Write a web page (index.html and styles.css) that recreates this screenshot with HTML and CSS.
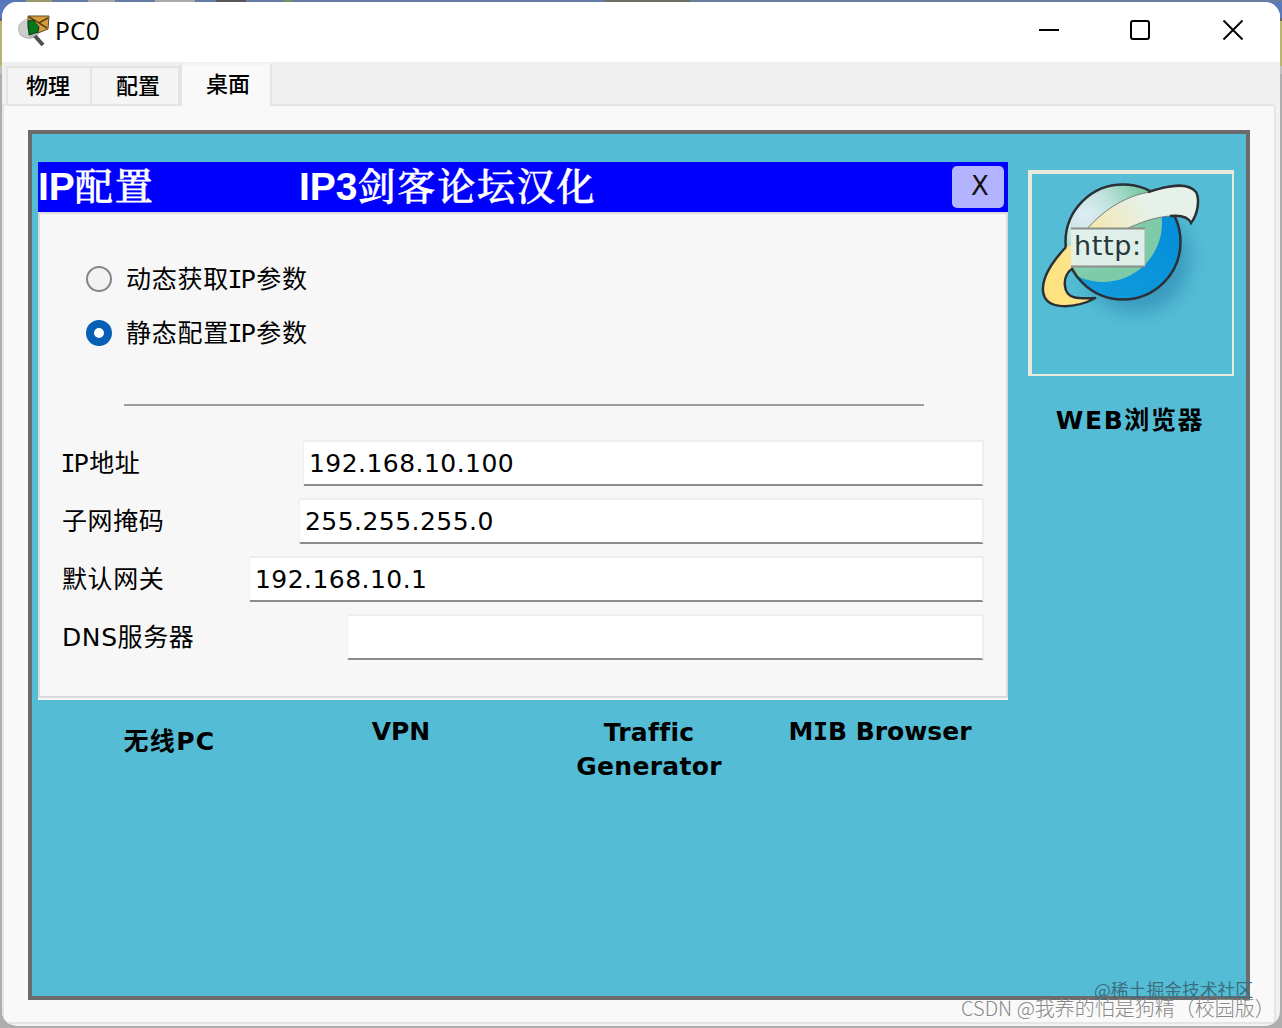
FILE: index.html
```html
<!DOCTYPE html>
<html lang="zh-CN">
<head>
<meta charset="utf-8">
<title>PC0</title>
<link rel="stylesheet" href="styles.css">
</head>
<body>
<div class="window">
  <header class="titlebar">
    <svg class="app-icon" width="32" height="32" viewBox="0 0 32 32">
      <ellipse cx="11" cy="14" rx="11" ry="10" fill="#b3b5b4"/>
      <path d="M3 8Q8 2 14 4L11 23Q1 21 0 14Z" fill="#cdcecc"/>
      <path d="M17 21L25 30" stroke="#4d504d" stroke-width="4"/>
      <path d="M10 1L31 1L30 14L20 18L10 14Z" fill="#d89c3b" stroke="#5b4a2c"/>
      <path d="M11 2L21 8L30 3M21 8L29 13" fill="none" stroke="#5a4015" stroke-width="1.5"/>
      <path d="M10 6L15 5L21 12L20 17L11 20Z" fill="#08761c" stroke="#064511"/>
    </svg>
    <h1 class="title">PC0</h1>
    <svg class="controls" width="206" height="24" viewBox="0 0 206 24">
      <g fill="none" stroke="#000" stroke-width="2">
        <path d="M0 12H20"/>
        <rect x="92" y="3" width="18" height="18" rx="2"/>
        <path d="M184.500 2.500L203.500 21.500M203.500 2.500L184.500 21.500" stroke-width="1.900"/>
      </g>
    </svg>
  </header>
  <nav class="tabs">
    <span class="tab tab-physical">物理</span>
    <span class="tab tab-config">配置</span>
    <span class="tab tab-desktop">桌面</span>
  </nav>
  <main class="pane">
    <div class="desktop">
      <div class="left">
        <section class="dialog">
          <div class="dialog-head">
            <span class="head-name">IP<b>配置</b></span>
            <span class="head-credit">IP3<b>剑客论坛汉化</b></span>
            <span class="close">X</span>
          </div>
          <div class="dialog-body">
            <div class="radio"><i class="dot"></i><span>动态获取<span class="cap-i">I</span>P参数</span></div>
            <div class="radio"><i class="dot checked"></i><span>静态配置<span class="cap-i">I</span>P参数</span></div>
            <div class="rule"></div>
            <div class="field"><label><span class="cap-i">I</span>P地址</label><div class="input w-ip">192.168.10.100</div></div>
            <div class="field"><label>子网掩码</label><div class="input w-mask">255.255.255.0</div></div>
            <div class="field"><label>默认网关</label><div class="input w-gate">192.168.10.1</div></div>
            <div class="field"><label>DNS服务器</label><div class="input w-dns"></div></div>
          </div>
        </section>
        <div class="apps">
          <span class="app wireless">无线PC</span>
          <span class="app">VPN</span>
          <span class="app traffic">Traffic<br>Generator</span>
          <span class="app mib">M<span class="cap-i">I</span>B Browser</span>
        </div>
      </div>
      <div class="right">
        <div class="web-icon">
          <svg width="200" height="200" viewBox="1032 174 200 200">
            <defs>
              <linearGradient id="ring" gradientUnits="userSpaceOnUse" x1="1045" y1="300" x2="1185" y2="195"><stop offset="0" stop-color="#ffe27c"/><stop offset=".3" stop-color="#fbe48e"/><stop offset=".55" stop-color="#f0eac0"/><stop offset=".8" stop-color="#e6f1ea"/></linearGradient>
              <radialGradient id="land" gradientUnits="userSpaceOnUse" cx="1085" cy="215" r="78"><stop offset="0" stop-color="#e0edf5"/><stop offset=".35" stop-color="#bfe2dd"/><stop offset=".75" stop-color="#7dcba8"/></radialGradient>
              <linearGradient id="sea" x1="0" y1="1" x2="1" y2="0"><stop offset="0" stop-color="#149ddd"/><stop offset="1" stop-color="#008bd8"/></linearGradient>
              <filter id="soft" x="-30%" y="-30%" width="160%" height="160%"><feGaussianBlur stdDeviation="9"/></filter>
              <clipPath id="globe"><circle cx="1123" cy="242" r="57"/></clipPath>
            </defs>
            <circle cx="1136" cy="259" r="54" fill="#287eab" opacity=".55" filter="url(#soft)"/>
            <circle cx="1123" cy="242" r="58" fill="url(#sea)"/>
            <circle cx="1103" cy="223" r="59" fill="url(#land)" clip-path="url(#globe)"/>
            <circle cx="1123" cy="242" r="57.500" fill="none" stroke="#2c3035" stroke-width="2.500"/>
            <path d="M1066 247C1051 263 1042 279 1043 291C1045 311 1074 309 1096 298C1078 299 1066 299 1065 286C1064 279 1067 272 1073 268L1084 241Z" fill="url(#ring)"/>
            <path d="M1066 247C1051 263 1042 279 1043 291C1045 311 1074 309 1096 298C1078 299 1066 299 1065 286C1064 279 1067 272 1073 268" fill="none" stroke="#2c3035" stroke-width="2.500"/>
            <path d="M1087 229C1105 208 1129 195 1150 192C1166 186 1187 181 1196 192C1200 199 1198 214 1191 223C1188 216 1180 215 1170 216C1154 217 1137 224 1126 229Z" fill="url(#ring)" stroke="#777c7a"/>
            <path d="M1148 192C1166 186 1187 181 1196 192C1200 199 1198 214 1191 223C1188 216 1180 215 1170 216" fill="none" stroke="#2c3035" stroke-width="2.500"/>
            <rect x="1071" y="229" width="74" height="37" fill="#e3f0eb" fill-opacity=".94"/>
            <path d="M1071 228.500H1145M1071 266.500H1145" stroke="#8b8e89" stroke-width="2"/>
            <path d="M1145 229V266" stroke="#a9b5ae"/>
            <text class="http" x="1074" y="255" textLength="67">http:</text>
          </svg>
        </div>
        <span class="app web-label">WEB浏览器</span>
      </div>
    </div>
  </main>
</div>
<div class="mark mark-juejin">@稀土掘金技术社区</div>
<div class="mark mark-csdn">CSDN @我养的怕是狗精（校园版）</div>
</body>
</html>
```
FILE: styles.css
```css
* { box-sizing: border-box; }
body {
  margin: 0;
  height: 1028px;
  padding: 2px;
  overflow: hidden;
  position: relative;
  color: #000;
  font-family: "DejaVu Sans", "Noto Sans CJK SC", sans-serif;
  background:
    linear-gradient(90deg, #5877b8 0 26px, #99986a 26px 52px, #637ba4 52px 88px, #a6a6a6 88px 115px, #637ba4 115px 155px, #aaa 155px 195px, #637ba4 195px 216px, #575555 216px 246px, #637ba4 246px 284px, #6d9654 284px 292px, #637ba4 292px 605px, #706b65 605px 690px, #667f9f 690px) 0 0 / 100% 2px no-repeat,
    linear-gradient(#5b7abb 0 18px, #65656a 18px 21px, #b8b56e 21px 66px, #c1c1c1 66px 74px, #aeaeae 74px);
}
.window {
  height: 1024px;
  display: flex;
  flex-direction: column;
  border-radius: 15px;
  overflow: hidden;
  background: #f1f1f1;
}
.titlebar {
  height: 60px;
  flex: none;
  display: flex;
  align-items: center;
  padding: 0 35px 4px 16px;
  background: #fff;
}
.app-icon { margin-top: 2px; }
.title {
  margin: 2px auto 0 5px;
  font: 400 24.5px/32px "Noto Sans", sans-serif;
  letter-spacing: .2px;
}
.tabs {
  height: 42px;
  flex: none;
  display: flex;
  align-items: flex-end;
  padding-left: 4px;
  background: #efefef;
}
.tab {
  height: 38px;
  border: 2px solid #e4e4e4;
  border-bottom: 0;
  background: #f4f4f4;
  font: 500 22px/32px "Noto Sans CJK SC", sans-serif;
}
.tab-physical { width: 86px; padding-left: 18px; }
.tab-config { width: 88px; padding-left: 24px; border-left: 0; }
.tab-desktop {
  width: 92px;
  height: 43px;
  margin-bottom: -2px;
  padding-left: 24px;
  border-top-color: #f4f4f4;
  line-height: 35px;
  background: #f9f9f9;
  z-index: 1;
}
.pane {
  flex: 1;
  margin: 0 4px 4px 0;
  padding: 24px 24px 22px 24px;
  border: 2px solid #e5e5e5;
  border-radius: 0 4px 4px 0;
  background: #f9f9f9;
}
.desktop {
  width: 1222px;
  height: 870px;
  display: flex;
  gap: 20px;
  padding: 28px 0 0 6px;
  border: 4px solid #6b6b6b;
  background: #54bdd5;
}
.left { width: 970px; }
.dialog {
  height: 538px;
  border-bottom: 2px solid #f8f8f8;
  background: #f7f7f7;
}
.dialog-head {
  height: 50px;
  display: flex;
  align-items: center;
  background: #00f;
  color: #fff;
  font: bold 39px/48px "Liberation Sans", sans-serif;
}
.dialog-head b {
  font: 500 38px/48px "Noto Serif CJK SC", "Noto Sans CJK SC", serif;
  letter-spacing: 1.8px;
  -webkit-text-stroke: .6px #fff;
}
.head-name, .head-credit { padding-bottom: 3px; }
.head-name { width: 261px; }
.head-credit { flex: 1; }
.close {
  width: 52px;
  height: 42px;
  margin-right: 4px;
  padding-left: 4px;
  border-radius: 5px;
  background: #b3b3ff;
  color: #111;
  font: 26px/40px "DejaVu Sans", sans-serif;
  text-align: center;
}
.dialog-body {
  height: 486px;
  padding: 38px 22px 0;
  border: 2px solid #dcdce0;
}
.radio {
  height: 54px;
  display: flex;
  align-items: center;
  gap: 14px;
  margin-left: 24px;
  font-size: 25px;
  line-height: 34px;
  letter-spacing: .75px;
}
.radio > span { padding-top: 2px; }
.dot {
  width: 26px;
  height: 26px;
  border: 2px solid #858585;
  border-radius: 50%;
  background: #f2f2f2;
}
.dot.checked { border: 8px solid #0560b6; background: #fff; }
.cap-i {
  display: inline-block;
  width: 11px;
  margin-right: .5px;
  font-family: "DejaVu Sans Mono", monospace;
  text-indent: -1.6px;
  letter-spacing: 0;
}
.rule {
  width: 800px;
  height: 2px;
  margin: 44px 0 34px 62px;
  background: #9d9d9d;
}
.field {
  height: 46px;
  display: flex;
  justify-content: space-between;
  margin-bottom: 12px;
  font-size: 25px;
  line-height: 44px;
}
.field label {
  padding-top: 2px;
  letter-spacing: .6px;
  white-space: nowrap;
}
.input {
  height: 46px;
  padding: 1px 0 0 5px;
  border: 2px solid #eee;
  border-left-width: 1px;
  border-bottom-color: #8b8b8b;
  border-radius: 2px;
  background: #fff;
  letter-spacing: .45px;
  line-height: 42px;
}
.w-ip { width: 681px; }
.w-mask { width: 685px; }
.w-gate { width: 735px; }
.w-dns { width: 637px; }
.apps {
  display: grid;
  grid-template-columns: 263px 200px 296px 166px;
  padding-top: 15px;
}
.app {
  font-size: 25px;
  font-weight: 700;
  line-height: 34px;
  text-align: center;
  white-space: nowrap;
}
.wireless { padding-top: 10px; letter-spacing: 1.3px; }
.traffic { padding-top: 1px; letter-spacing: .3px; }
.mib { justify-self: center; }
.mib .cap-i { width: 14px; text-indent: -.5px; }
.right {
  width: 206px;
  padding-top: 8px;
  display: flex;
  flex-direction: column;
  gap: 28px;
}
.web-icon {
  height: 206px;
  border: 2px solid #e8eadb;
  border-width: 4px 2px 2px 4px;
}
.web-icon svg { display: block; }
.web-label { padding-right: 2px; letter-spacing: 1.6px; }
.http { font: 27px "DejaVu Sans", sans-serif; fill: #25383c; }
.mark {
  position: absolute;
  white-space: nowrap;
  font: 300 20px/24px "Noto Sans CJK SC", sans-serif;
  text-shadow: 1px 1px 0 rgba(255, 255, 255, .6);
}
.mark-juejin {
  left: 1094px;
  top: 980px;
  color: #3b6f80;
  font-size: 17.8px;
  font-weight: 400;
  line-height: 18px;
  text-shadow: none;
}
.mark-csdn { left: 961px; top: 996px; color: #888; }
```
